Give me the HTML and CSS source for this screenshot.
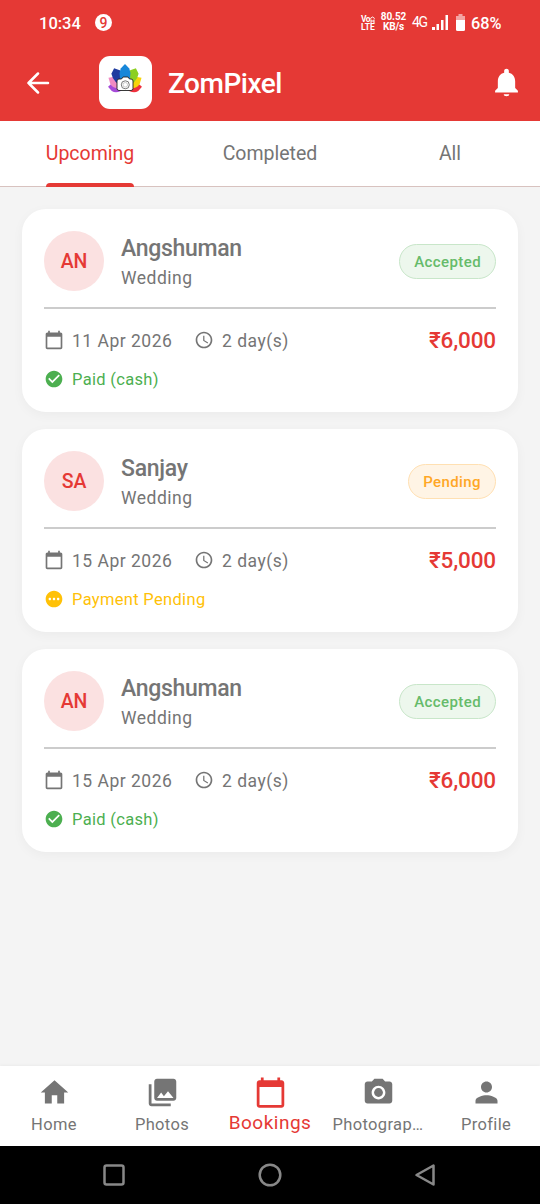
FILE: index.html
```html
<!DOCTYPE html>
<html lang="en">
<head>
<meta charset="utf-8">
<title>ZomPixel</title>
<link rel="stylesheet" href="styles.css">
</head>
<body>
<svg class="defs" width="0" height="0">
  <symbol id="calendar" viewBox="0 0 24 24"><path d="M20 3h-1V1h-2v2H7V1H5v2H4c-1.1 0-2 .9-2 2v16c0 1.1.9 2 2 2h16c1.1 0 2-.9 2-2V5c0-1.1-.9-2-2-2zm0 18H4V8h16v13z"/></symbol>
  <symbol id="clock" viewBox="0 0 24 24"><path d="M11.99 2C6.47 2 2 6.48 2 12s4.47 10 9.99 10C17.52 22 22 17.52 22 12S17.52 2 11.99 2zM12 20c-4.42 0-8-3.58-8-8s3.58-8 8-8 8 3.58 8 8-3.58 8-8 8zm.5-13H11v6l5.25 3.15.75-1.23-4.5-2.67z"/></symbol>
  <symbol id="check" viewBox="0 0 24 24"><path d="M12 2C6.48 2 2 6.48 2 12s4.48 10 10 10 10-4.48 10-10S17.52 2 12 2zm-2 15l-5-5 1.41-1.41L10 14.17l7.59-7.59L19 8l-9 9z"/></symbol>
  <symbol id="dots" viewBox="0 0 24 24"><path d="M12 2C6.48 2 2 6.48 2 12s4.48 10 10 10 10-4.48 10-10S17.52 2 12 2zM7 13.5c-.83 0-1.5-.67-1.5-1.5s.67-1.5 1.5-1.5 1.500.67 1.500 1.500-.67 1.500-1.500 1.500zm5 0c-.83 0-1.500-.67-1.500-1.500s.67-1.500 1.500-1.500 1.500.67 1.500 1.500-.67 1.500-1.500 1.500zm5 0c-.83 0-1.500-.67-1.500-1.500s.67-1.500 1.500-1.500 1.500.67 1.500 1.500-.67 1.500-1.500 1.500z"/></symbol>
</svg>
<header class="header">
  <div class="status">
    <span class="time">10:34</span>
    <span class="notice">9</span>
    <div class="volte"><span class="vo">Vo<svg width="5" height="8" viewBox="0 0 5 8"><path d="M1 8V4.500M4 8V4.500M1 6h3M.3 3.500Q2.500.5 4.700 3.500" fill="none" stroke="#fff"/></svg></span><span>LTE</span></div>
    <div class="speed"><span>80.52</span><span>KB/s</span></div>
    <span class="net">4G</span>
    <svg class="signal" width="17" height="15" viewBox="0 0 17 15"><path d="M0 12h3v3H0zM4.500 9h2.500v6H4.500zM9 5h2.500v10H9zM13.500 0H16v15h-2.500z"/></svg>
    <svg class="battery" width="9" height="17" viewBox="0 0 9 17"><path d="M2.500 0h4v2H9v4H0V2h2.500z" opacity=".55"/><path d="M0 6h9v9.500Q9 17 7.500 17h-6Q0 17 0 15.500z"/></svg>
    <span class="percent">68%</span>
  </div>
  <div class="appbar">
    <svg class="back" width="24" height="22" viewBox="0 0 24 22"><path d="M12 1.500L2.500 11l9.500 9.500M2.500 11H22" fill="none" stroke="#fff" stroke-width="2.500" stroke-linecap="round" stroke-linejoin="round"/></svg>
    <div class="logo">
      <svg width="36" height="32" viewBox="0 0 36 32">
        <g transform="translate(18 25)">
          <path transform="rotate(-86)" d="M0 0Q-7-7-4-13L0-17 4-13Q7-7 0 0z" fill="#a64bd8"/>
          <path transform="rotate(86)" d="M0 0Q-7-7-4-13L0-17 4-13Q7-7 0 0z" fill="#ef303d"/>
          <path transform="rotate(-58)" d="M0 0Q-8-9-4-15L0-19.500 4-15Q8-9 0 0z" fill="#f18bc3"/>
          <path transform="rotate(58)" d="M0 0Q-8-9-4-15L0-19.500 4-15Q8-9 0 0z" fill="#f7d40a"/>
          <path transform="rotate(-29)" d="M0 0Q-8-10-5-19L0-22.500 4-18Q8-10 0 0z" fill="#1f3b9f"/>
          <path transform="rotate(29)" d="M0 0Q-8-10-4-18L0-22.500 5-19Q8-10 0 0z" fill="#8ccf20"/>
          <path d="M0 0Q-8-11-4.300-19.500L0-24 4.300-19.500Q8-11 0 0z" fill="#1787d9"/>
        </g>
        <path d="M12 16h2.500l1.500-2h5l1.500 2H24q2 0 2 2v7.500q0 2-2 2H12q-2 0-2-2V18q0-2 2-2z" fill="#fff" stroke="#222" stroke-width=".9"/>
        <circle cx="18.300" cy="21.800" r="4" fill="#fff" stroke="#555" stroke-width=".8"/>
        <circle cx="18.300" cy="21.800" r="2.300" fill="none" stroke="#aaa" stroke-width=".6"/>
      </svg>
    </div>
    <h1 class="title">ZomPixel</h1>
    <svg class="bell" width="33" height="33" viewBox="0 0 24 24"><path d="M12 22c1.100 0 2-.4 2-1.400h-4c0 1 .9 1.400 2 1.400zm6.300-6v-5c0-3.070-1.700-5.440-4.600-6.120V3.500c0-.83-.87-1.500-1.700-1.500s-1.700.67-1.700 1.500v1.380C7.400 5.560 5.700 7.920 5.700 11v5L3.700 18v1.300h16.600V18z"/></svg>
  </div>
</header>
<nav class="tabs">
  <span class="tab on">Upcoming</span>
  <span class="tab">Completed</span>
  <span class="tab">All</span>
</nav>
<main class="list">
  <article class="card">
    <div class="top">
      <div class="avatar">AN</div>
      <div class="who"><h2 class="name">Angshuman</h2><span class="kind">Wedding</span></div>
      <span class="badge accepted">Accepted</span>
    </div>
    <div class="info">
      <svg class="ico"><use href="#calendar"/></svg><span class="date">11 Apr 2026</span>
      <svg class="ico"><use href="#clock"/></svg><span class="days">2 day(s)</span>
      <span class="price">₹6,000</span>
    </div>
    <div class="pay paid"><svg class="ico"><use href="#check"/></svg><span>Paid (cash)</span></div>
  </article>
  <article class="card">
    <div class="top">
      <div class="avatar">SA</div>
      <div class="who"><h2 class="name">Sanjay</h2><span class="kind">Wedding</span></div>
      <span class="badge pending">Pending</span>
    </div>
    <div class="info">
      <svg class="ico"><use href="#calendar"/></svg><span class="date">15 Apr 2026</span>
      <svg class="ico"><use href="#clock"/></svg><span class="days">2 day(s)</span>
      <span class="price">₹5,000</span>
    </div>
    <div class="pay due"><svg class="ico"><use href="#dots"/></svg><span>Payment Pending</span></div>
  </article>
  <article class="card">
    <div class="top">
      <div class="avatar">AN</div>
      <div class="who"><h2 class="name">Angshuman</h2><span class="kind">Wedding</span></div>
      <span class="badge accepted">Accepted</span>
    </div>
    <div class="info">
      <svg class="ico"><use href="#calendar"/></svg><span class="date">15 Apr 2026</span>
      <svg class="ico"><use href="#clock"/></svg><span class="days">2 day(s)</span>
      <span class="price">₹6,000</span>
    </div>
    <div class="pay paid"><svg class="ico"><use href="#check"/></svg><span>Paid (cash)</span></div>
  </article>
</main>
<nav class="bottom">
  <div class="item"><svg class="nico" viewBox="0 0 24 24"><path d="M10 20v-6h4v6h5v-8h3L12 3 2 12h3v8z"/></svg><span>Home</span></div>
  <div class="item"><svg class="nico" viewBox="0 0 24 24"><path d="M22 16V4c0-1.100-.9-2-2-2H8c-1.100 0-2 .9-2 2v12c0 1.100.9 2 2 2h12c1.100 0 2-.9 2-2zm-11-4l2.030 2.710L16 11l4 5H8l3-4zM2 6v14c0 1.100.9 2 2 2h14v-2H4V6H2z"/></svg><span>Photos</span></div>
  <div class="item active"><svg class="nico"><use href="#calendar"/></svg><span>Bookings</span></div>
  <div class="item"><svg class="nico" viewBox="0 0 24 24"><circle cx="12" cy="12" r="3.200"/><path d="M9 2L7.170 4H4c-1.100 0-2 .9-2 2v12c0 1.100.9 2 2 2h16c1.100 0 2-.9 2-2V6c0-1.100-.9-2-2-2h-3.170L15 2H9zm3 15c-2.760 0-5-2.240-5-5s2.240-5 5-5 5 2.240 5 5-2.240 5-5 5z"/></svg><span>Photograp…</span></div>
  <div class="item"><svg class="nico" viewBox="0 0 24 24"><path d="M12 12c2.210 0 4-1.790 4-4s-1.790-4-4-4-4 1.790-4 4 1.790 4 4 4zm0 2c-2.670 0-8 1.340-8 4v2h16v-2c0-2.660-5.330-4-8-4z"/></svg><span>Profile</span></div>
</nav>
<footer class="system">
  <svg width="24" height="24" viewBox="0 0 24 24"><rect x="2.500" y="2.500" width="19" height="19" rx="2"/></svg>
  <svg width="24" height="24" viewBox="0 0 24 24"><circle cx="12" cy="12" r="10.300"/></svg>
  <svg width="24" height="24" viewBox="0 0 24 24"><path d="M2.500 12L19.500 2.500v19z"/></svg>
</footer>
</body>
</html>
```
FILE: styles.css
```css
* { box-sizing: border-box; }
body {
  margin: 0;
  width: 540px;
  height: 1204px;
  display: flex;
  flex-direction: column;
  overflow: hidden;
  background: #f4f4f4;
  color: #757575;
  font-family: Roboto, "Noto Sans", sans-serif;
}
.defs { display: block; flex: none; height: 0; }
svg { flex: none; fill: currentColor; }
.header { height: 121px; background: #e53935; color: #fff; }
.status { height: 44px; display: flex; align-items: center; padding-left: 39px; }
.time { width: 56px; padding-top: 2px; font-size: 16.500px; font-weight: 500; }
.notice {
  width: 17px; height: 17px; border-radius: 50%; background: #fff; color: #e53935;
  font-size: 14px; font-weight: 500; line-height: 18px; text-align: center;
}
.volte, .speed { display: flex; flex-direction: column; font-weight: 700; white-space: nowrap; }
.volte { width: 20px; margin-left: 249px; padding-top: 1px; font-size: 8.500px; line-height: 8px; }
.vo { display: flex; letter-spacing: -.6px; }
.speed { width: 25px; font-size: 10px; line-height: 10px; letter-spacing: -.1px; align-items: center; }
.net { margin-left: 6px; width: 20px; font-size: 14px; letter-spacing: -1.300px; }
.battery { margin-left: 7px; }
.percent { margin-left: 6px; padding-top: 2px; font-size: 16.300px; font-weight: 500; }
.appbar { height: 77px; display: flex; align-items: center; }
.back { margin-left: 26px; }
.logo {
  width: 53px; height: 53px; margin-left: 49px; border-radius: 11px; background: #fff;
  display: flex; justify-content: center; padding: 7px 1px 0 0;
}
.title { margin: 0 0 0 16px; padding-top: 2px; flex: 1; font-size: 28px; font-weight: 500; letter-spacing: -.5px; }
.bell { margin-right: 17px; }
.tabs { height: 66px; display: flex; align-items: flex-start; background: #fff; border-bottom: 1px solid #d8c2bf; }
.tab { flex: 1; height: 66px; text-align: center; font-size: 19.500px; line-height: 65px; }
.tab.on { color: #e53935; }
.tab.on::after {
  content: ""; display: block; width: 88px; height: 4px; margin: -3px auto 0;
  border-radius: 4px 4px 0 0; background: #e53935;
}
.list { flex: 1; padding: 22px; display: flex; flex-direction: column; gap: 17px; }
.card {
  height: 203px; flex: none; padding: 22px; background: #fff; border-radius: 24px;
  box-shadow: 0 3px 12px rgba(0, 0, 0, .04);
}
.top { height: 78px; padding-bottom: 16px; display: flex; align-items: center; border-bottom: 2px solid #ccc; }
.avatar {
  width: 60px; height: 60px; border-radius: 50%; background: #fbe1e1; color: #e53935;
  font-size: 19.500px; font-weight: 500; line-height: 61px; text-align: center; letter-spacing: -.2px;
}
.who { flex: 1; margin-left: 17px; padding-top: 4px; display: flex; flex-direction: column; }
.name { margin: 0; font-size: 23px; font-weight: 500; line-height: 30px; letter-spacing: -.3px; }
.kind { font-size: 17.500px; line-height: 28px; letter-spacing: .5px; }
.badge {
  height: 35px; padding: 0 14px; border: 1px solid; border-radius: 18px;
  font-size: 15px; font-weight: 500; line-height: 34px; letter-spacing: .4px;
}
.accepted { color: #66bb6a; background: #edf7ed; border-color: #c8e6c9; }
.pending { color: #ffa726; background: #fff4e5; border-color: #ffe0b2; }
.info { height: 32px; margin-top: 15px; display: flex; align-items: center; font-size: 17.500px; letter-spacing: .5px; }
.ico { width: 20px; height: 20px; margin-right: 8px; }
.date { width: 122px; padding-top: 1px; }
.days { flex: 1; padding-top: 1px; }
.price { color: #e53935; font-size: 22.500px; font-weight: 500; letter-spacing: -.15px; }
.pay { height: 30px; margin-top: 8px; display: flex; align-items: center; font-size: 16.500px; letter-spacing: .32px; }
.paid { color: #4caf50; }
.due { color: #ffc107; }
.bottom { height: 80px; display: flex; background: #fff; box-shadow: 0 -1px 3px rgba(0, 0, 0, .04); }
.item { width: 108px; display: flex; flex-direction: column; align-items: center; padding-top: 10px; font-size: 16.500px; letter-spacing: .35px; }
.nico { width: 33px; height: 33px; }
.item span { line-height: 20px; margin-top: 6px; }
.item.active { color: #e53935; font-size: 19px; letter-spacing: .5px; }
.active span { margin-top: 4px; }
.system { height: 58px; display: flex; justify-content: center; align-items: center; gap: 132px; background: #000; }
.system svg { fill: none; stroke: #888; stroke-width: 2.500; stroke-linejoin: round; }
```
